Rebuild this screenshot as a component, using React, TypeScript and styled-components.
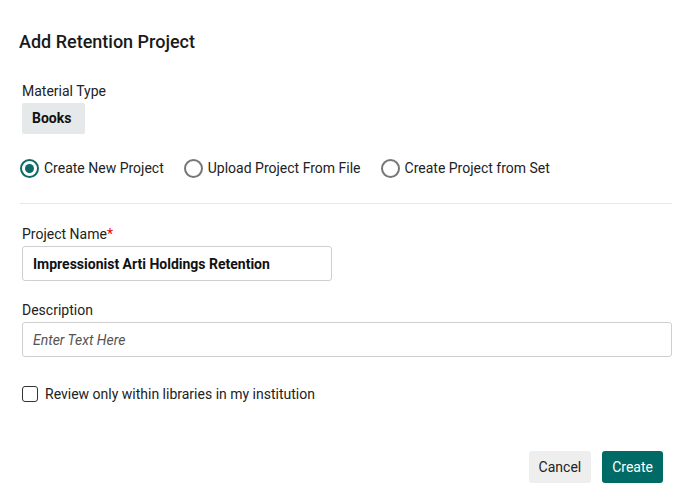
import styled, { createGlobalStyle } from "styled-components"

const GlobalStyle = createGlobalStyle`
  body {
    margin: 0;
    background: #fff;
    font-family: Roboto, "Liberation Sans", sans-serif;
    color: #222;
  }
`

const options = [
  { label: "Create New Project", checked: true },
  { label: "Upload Project From File", checked: false },
  { label: "Create Project from Set", checked: false },
]

export default function App() {
  return (
    <>
      <GlobalStyle />
      <Dialog>
        <Title>Add Retention Project</Title>

        <Field gap="30px">
          <Label>Material Type</Label>
          <Chip>Books</Chip>
        </Field>

        <RadioRow>
          {options.map((o) => (
            <RadioOption key={o.label}>
              <RadioCircle checked={o.checked} />
              {o.label}
            </RadioOption>
          ))}
        </RadioRow>

        <Divider />

        <Field gap="22px">
          <Label>
            Project Name<Required>*</Required>
          </Label>
          <TextInput
            width="310px"
            bold
            defaultValue="Impressionist Arti Holdings Retention"
          />
        </Field>

        <Field gap="21px">
          <Label>Description</Label>
          <TextInput width="650px" placeholder="Enter Text Here" />
        </Field>

        <CheckRow>
          <CheckBox />
          Review only within libraries in my institution
        </CheckRow>

        <Footer>
          <Button>Cancel</Button>
          <Button primary>Create</Button>
        </Footer>
      </Dialog>
    </>
  )
}

const Dialog = styled.div`
  width: 692px;
  height: 499px;
  box-sizing: border-box;
  padding: 31px 20px 0 20px;
  display: flex;
  flex-direction: column;
`

const Title = styled.h2`
  margin: 0 0 0 -1px;
  font-size: 18px;
  font-weight: 500;
  line-height: 22px;
  color: #1a1a1a;
`

const Field = styled.div<{ gap: string }>`
  display: flex;
  flex-direction: column;
  align-items: flex-start;
  margin-left: 2px;
  margin-top: ${(p) => p.gap};
`

const Label = styled.div`
  font-size: 14px;
  line-height: 16px;
  color: #222;
  margin-bottom: 4px;
`

const Required = styled.span`
  color: #e00;
`

const Chip = styled.div`
  background: #e6e9ea;
  border-radius: 2px;
  font-size: 14px;
  font-weight: 700;
  line-height: 31px;
  padding: 0 14px 0 10px;
  color: #111;
`

const RadioRow = styled.div`
  display: flex;
  gap: 20px;
  margin-top: 24px;
`

const RadioOption = styled.label`
  display: flex;
  align-items: center;
  gap: 5px;
  font-size: 14px;
  line-height: 20px;
  color: #222;
`

const RadioCircle = styled.span<{ checked: boolean }>`
  width: 19px;
  height: 19px;
  box-sizing: border-box;
  border-radius: 50%;
  border: 2px solid ${(p) => (p.checked ? "#0b6b66" : "#777")};
  display: flex;
  align-items: center;
  justify-content: center;

  &::after {
    content: "";
    width: 9px;
    height: 9px;
    border-radius: 50%;
    background: ${(p) => (p.checked ? "#0b6b66" : "transparent")};
  }
`

const Divider = styled.hr`
  border: none;
  border-top: 1px solid #e8e8e8;
  margin: 25px 0 0 0;
  width: 652px;
`

const TextInput = styled.input<{ width: string; bold?: boolean }>`
  width: ${(p) => p.width};
  height: 35px;
  box-sizing: border-box;
  border: 1px solid #cfcfcf;
  border-radius: 3px;
  padding: 0 10px;
  font-family: Roboto, "Liberation Sans", sans-serif;
  font-size: 14px;
  font-weight: ${(p) => (p.bold ? 700 : 400)};
  color: #111;
  outline: none;

  &::placeholder {
    font-style: italic;
    color: #555;
    font-size: 14px;
  }
`

const CheckRow = styled.label`
  display: flex;
  align-items: center;
  gap: 7px;
  margin: 27px 0 0 2px;
  font-size: 14px;
  line-height: 20px;
  color: #222;
`

const CheckBox = styled.span`
  width: 16px;
  height: 16px;
  box-sizing: border-box;
  border: 1.5px solid #333;
  border-radius: 3px;
`

const Footer = styled.div`
  display: flex;
  justify-content: flex-end;
  gap: 11px;
  margin-top: 47px;
  padding-right: 9px;
`

const Button = styled.button<{ primary?: boolean }>`
  height: 32px;
  padding: 0 10px;
  border: none;
  border-radius: 3px;
  font-family: Roboto, "Liberation Sans", sans-serif;
  font-size: 14px;
  background: ${(p) => (p.primary ? "#006b66" : "#eeeeee")};
  color: ${(p) => (p.primary ? "#fff" : "#222")};
`
